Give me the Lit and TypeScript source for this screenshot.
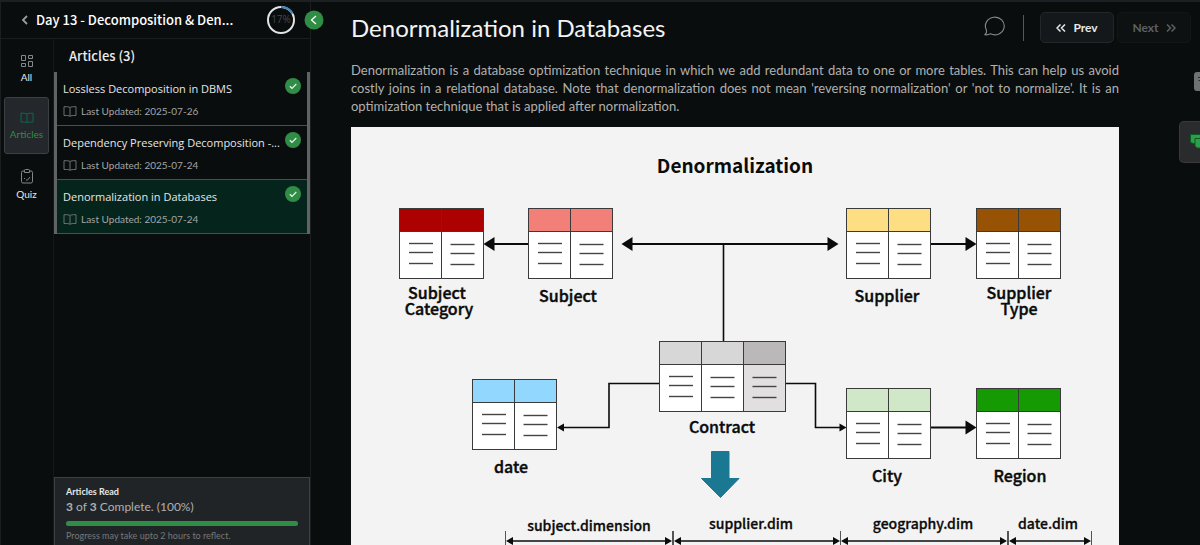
import { LitElement, html, svg, css } from "lit";
import { customElement, property } from "lit/decorators.js";
import { classMap } from "lit/directives/class-map.js";

type Pt = [number, number];

interface Entity {
  x: number;
  y: number;
  heads: string[];
  bodies?: string[];
}

const ENTITIES: Entity[] = [
  { x: 48, y: 81, heads: ["#ad0000", "#ad0000"] },
  { x: 177, y: 81, heads: ["#f28079", "#f28079"] },
  { x: 495, y: 81, heads: ["#fede83", "#fede83"] },
  { x: 625, y: 81, heads: ["#985203", "#985203"] },
  { x: 308, y: 214, heads: ["#d7d7d7", "#d7d7d7", "#bab8b9"], bodies: ["#fff", "#fff", "#e2dfe0"] },
  { x: 121, y: 252, heads: ["#92d8fe", "#92d8fe"] },
  { x: 495, y: 261, heads: ["#d0e8c8", "#d0e8c8"] },
  { x: 625, y: 261, heads: ["#159a04", "#159a04"] },
];

const LABELS: [number, number, string][] = [
  [86, 172, "Subject"],
  [88, 188, "Category"],
  [217, 175, "Subject"],
  [536, 175, "Supplier"],
  [668, 172, "Supplier"],
  [668, 188, "Type"],
  [371, 306, "Contract"],
  [160, 346, "date"],
  [536, 355, "City"],
  [669, 355, "Region"],
];

const DIMENSIONS: [number, number, number, number, string][] = [
  [154, 321, 238, 404, "subject.dimension"],
  [322, 489, 400, 402, "supplier.dim"],
  [489, 656, 572, 402, "geography.dim"],
  [657, 740, 697, 402, "date.dim"],
];

@customElement("denorm-diagram")
export class DenormDiagram extends LitElement {
  static styles = css`
    :host { display: block; background: #f3f3f3; }
    svg { display: block; width: 100%; height: auto; }
    text { font-family: "Noto Sans CJK SC", sans-serif; font-weight: 700; fill: #0b0b0b; text-anchor: middle; }
    .title { font-size: 19px; }
    .label { font-size: 16px; font-weight: 500; stroke: #0b0b0b; stroke-width: 0.4; }
    .dim { font-size: 14px; font-weight: 500; stroke: #0b0b0b; stroke-width: 0.3; }
    .box { stroke: #3a3a3a; stroke-width: 1; }
    .row { stroke: #444; stroke-width: 1.4; }
    .wire { stroke: #0b0b0b; fill: none; stroke-width: 1.6; }
    .thick { stroke-width: 2.2; }
    .tick { stroke: #555; stroke-width: 1; }
  `;

  private entity(e: Entity) {
    return e.heads.map((head, i) => {
      const x = e.x + 0.5 + i * 42;
      const y = e.y + 0.5;
      const shift = i === 0 ? 0 : 1;
      const from = x + (i === 0 ? 9.5 : 9);
      return svg`
        <rect class="box" x=${x} y=${y} width="42" height="70" fill=${e.bodies?.[i] ?? "#fff"}></rect>
        <rect class="box" x=${x} y=${y} width="42" height="23" fill=${head}></rect>
        ${[35, 44, 55].map((d) => svg`<line class="row" x1=${from} x2=${from + 24} y1=${y + d + shift} y2=${y + d + shift}></line>`)}
      `;
    });
  }

  private head([x, y]: Pt, dir: 1 | -1, size: number) {
    const half = Math.round(size * 0.6);
    return svg`<polygon fill="#0b0b0b" points=${`${x},${y} ${x - dir * size},${y - half} ${x - dir * size},${y + half}`}></polygon>`;
  }

  render() {
    return html`
      <svg viewBox="0 0 768 446" role="img" aria-label="Denormalization">
        <text class="title" x="384" y="46">Denormalization</text>
        <path class="wire thick" d="M138 117H177M276 117H482M580 117H619M580 300.5H619"></path>
        <path class="wire" d="M372.5 117V214M308 256.5H258V300.5H212M434 256.5H464.500V300.500H490"></path>
        ${this.head([132.5, 117], -1, 11)} ${this.head([270.5, 117], -1, 11)}
        ${this.head([487.5, 117], 1, 11)} ${this.head([625.5, 117], 1, 11)}
        ${this.head([625.5, 300.5], 1, 11)}
        ${this.head([206, 300.5], -1, 7)} ${this.head([495.5, 300.5], 1, 7)}
        ${ENTITIES.map((e) => this.entity(e))}
        ${LABELS.map(([x, y, t]) => svg`<text class="label" x=${x} y=${y}>${t}</text>`)}
        <polygon fill="#1b7893" stroke="#1b7893" stroke-linejoin="round"
          points="360.500,324.500 378,324.500 378,351.500 388,351.500 369.500,370.500 350.500,351.500 360.500,351.500"></polygon>
        ${DIMENSIONS.map(([a, b, x, y, t]) => svg`
          <path class="tick" d=${`M${a + 0.5} 404V428M${b + 0.5} 404V428`}></path>
          <path class="wire" d=${`M${a + 6} 414H${b - 6}`}></path>
          ${this.head([a + 1, 414], -1, 7)} ${this.head([b, 414], 1, 7)}
          <text class="dim" x=${x} y=${y}>${t}</text>
        `)}
      </svg>
    `;
  }
}

const bookIcon = (w: number, h: number) => svg`
  <svg width=${w} height=${h} viewBox="0 0 14 11" fill="none" stroke="currentColor" aria-hidden="true">
    <path d="M7 1.500C6 .8 4.500.7 1 .7V9.500C4.500 9.500 6 9.600 7 10.300C8 9.600 9.500 9.500 13 9.500V.7C9.500.7 8 .8 7 1.500ZM7 1.500V10.300"></path>
  </svg>`;

@customElement("article-item")
export class ArticleItem extends LitElement {
  @property() heading = "";
  @property() date = "";
  @property({ type: Boolean }) active = false;

  static styles = css`
    :host { display: block; }
    .item {
      display: flex; justify-content: space-between; height: 53px;
      padding: 0 6px; border-bottom: 1px solid #4b4e50;
      color: #e6e6e6; text-decoration: none;
    }
    .active { background: #05241c; }
    .body { min-width: 0; padding-top: 8px; }
    .heading { font-family: "Open Sans", sans-serif; font-size: 11px; line-height: 18px; white-space: nowrap; }
    .meta { display: flex; align-items: center; gap: 4px; margin-top: 5px; font-size: 10px; line-height: 16px; color: #a3a6a6; }
    .meta svg { color: #6d7071; }
    .check { flex: none; margin: 6px 0 0; }
  `;

  render() {
    return html`
      <a href="#" class=${classMap({ item: true, active: this.active })}>
        <div class="body">
          <div class="heading">${this.heading}</div>
          <div class="meta">${bookIcon(14, 11)}<span>Last Updated: ${this.date}</span></div>
        </div>
        <svg class="check" width="16" height="16" viewBox="0 0 16 16" aria-label="Completed">
          <circle cx="8" cy="8" r="8" fill="#2f8d46"></circle>
          <path d="M4.800 8.200L7 10.300L11.300 6" fill="none" stroke="#e8f5ea" stroke-width="1.200"></path>
        </svg>
      </a>
    `;
  }
}

@customElement("app-root")
export class AppRoot extends LitElement {
  static styles = css`
    * { box-sizing: border-box; }
    :host { display: block; font-family: Lato, sans-serif; color: #e8e8e8; }
    button { font: inherit; color: inherit; border: 0; padding: 0; background: none; cursor: pointer; }
    .shell {
      position: relative; display: grid; grid-template-columns: 311px minmax(0, 1fr);
      height: 100vh; overflow: hidden; background: #0a0d0e; border-top: 2px solid #1d2022;
    }
    .side { position: relative; display: flex; flex-direction: column; min-height: 0; border: solid #1b1e1f; border-width: 0 1px; }
    .side-head { display: flex; align-items: center; height: 37px; padding: 0 15px 0 18px; border-bottom: 1px solid #1b1e1f; }
    .back { display: flex; padding: 2px; color: #9b9d9e; }
    .day { flex: 1; margin: 0 0 0 5px; font: 500 13px/20px "Noto Sans CJK SC", sans-serif; color: #fff; white-space: nowrap; }
    .ring { display: block; }
    .ring text { font: 10px "Open Sans", sans-serif; fill: #45484a; text-anchor: middle; }
    .collapse { position: absolute; top: 8px; right: -14px; display: flex; z-index: 1; }
    .cols { flex: 1; display: flex; min-height: 0; }
    .rail { width: 53px; flex: none; border-right: 1px solid #16191a; padding: 1px 4px 0 3px; }
    .tab {
      display: flex; flex-direction: column; align-items: center; gap: 3px; width: 100%; height: 57px;
      padding-top: 14px; border: 1px solid transparent; border-radius: 3px; font-size: 10px; line-height: 14px; color: #e8e8e8;
    }
    .tab svg { color: #85888a; }
    .tab.on { background: #24272b; border-color: #3c4044; color: #2f8d46; }
    .tab.on svg { color: #0a6b48; }
    .list-col { flex: 1; min-width: 0; display: flex; flex-direction: column; }
    .list-title { margin: 0; padding: 7px 15px 6px; font: 500 13px/20px "Noto Sans CJK SC", sans-serif; color: #ececec; }
    .list { border: solid #606364; border-width: 0 3px; }
    .progress { margin-top: auto; padding: 8px 11px 3px 11px; background: #212427; border: 1px solid #3e4143; border-bottom: 0; }
    .progress-name { font-size: 9px; line-height: 12px; font-weight: 700; }
    .progress-count { font-size: 12px; line-height: 18px; color: #aeb1b2; }
    progress { display: block; width: 100%; height: 5px; margin: 5px 0 4px; border: 0; appearance: none; -webkit-appearance: none; }
    progress::-webkit-progress-bar { background: #3a3d40; border-radius: 3px; }
    progress::-webkit-progress-value { background: #2f8d46; border-radius: 3px; }
    .note { font-size: 9px; line-height: 12px; color: #74787a; }
    .main { min-width: 0; overflow: auto; scrollbar-width: none; }
    .bar { display: flex; align-items: center; gap: 3px; height: 51px; padding: 0 9px 0 40px; }
    h1 { flex: 1; margin: 0; font-size: 24px; line-height: 30px; font-weight: 400; color: #f4f4f4; white-space: nowrap; }
    .divider { width: 1px; height: 26px; margin: 0 13px 0 14px; background: #55585a; }
    .nav { display: flex; align-items: center; justify-content: center; gap: 7px; width: 74px; height: 31px; border: 1px solid #22272b; border-radius: 5px; background: #14181b; font-size: 12px; font-weight: 700; }
    .nav:disabled { background: #0e1112; border-color: #121617; color: #5d6062; }
    .article { padding: 8px 81px 0 40px; }
    .article p { margin: 0 0 12px; font-size: 13px; line-height: 18px; color: #b0b1af; text-align: justify; }
    .notes { position: absolute; top: 70px; right: 0; display: flex; width: 6px; height: 19px; background: #6f7274; border-radius: 3px 0 0 3px; overflow: hidden; }
    .chat { position: absolute; top: 119px; right: 0; display: flex; align-items: flex-start; width: 21px; height: 42px; padding: 11px 0 0 10px; background: #2a2b2c; border: 1px solid #38393a; border-right: 0; border-radius: 5px 0 0 5px; overflow: hidden; }
    .chat svg { flex: none; }
    .notes svg { flex: none; }
  `;

  render() {
    return html`
      <div class="shell">
        <aside class="side">
          <header class="side-head">
            <button class="back" aria-label="Back">
              <svg width="8" height="10" viewBox="0 0 8 10" fill="none" stroke="currentColor" stroke-width="1.800"><path d="M6 1L2 5L6 9"></path></svg>
            </button>
            <h2 class="day">Day 13 - Decomposition &amp; Den...</h2>
            <svg class="ring" width="28" height="28" viewBox="0 0 28 28">
              <circle cx="14" cy="14" r="13" fill="none" stroke="#e2e4e5" stroke-width="2"></circle>
              <path d="M14 1A13 13 0 0 1 25.400 7.700" fill="none" stroke="#3f86b8" stroke-width="2"></path>
              <text x="14" y="17">17%</text>
            </svg>
          </header>
          <button class="collapse" aria-label="Collapse sidebar">
            <svg width="20" height="20" viewBox="0 0 20 20"><circle cx="10" cy="10" r="9.500" fill="#2f8d46"></circle><path d="M12 6L7.500 10L12 14" fill="none" stroke="#fff" stroke-width="1.300"></path></svg>
          </button>
          <div class="cols">
            <nav class="rail">
              <button class="tab">
                <svg width="12" height="12" viewBox="0 0 12 12" fill="none" stroke="currentColor"><path d="M.5 .5h4v5h-4zM7.500 .5h4v3h-4zM.5 8.500h4v3h-4zM7.500 6.500h4v5h-4z"></path></svg>
                All
              </button>
              <button class="tab on">
                ${bookIcon(14, 12)}
                Articles
              </button>
              <button class="tab">
                <svg width="12" height="15" viewBox="0 0 12 15" fill="none" stroke="currentColor"><path d="M3.500 2H2A1.500 1.500 0 0 0 .5 3.500V12.500A1.500 1.500 0 0 0 2 14H10A1.500 1.500 0 0 0 11.500 12.500V3.500A1.500 1.500 0 0 0 10 2H8.500M3.500 3.500V1.500A1 1 0 0 1 4.500 .5H7.500A1 1 0 0 1 8.500 1.500V3.500ZM3 9.500H4M5 10.500L6.200 11.500L9 8"></path></svg>
                Quiz
              </button>
            </nav>
            <div class="list-col">
              <h3 class="list-title">Articles (3)</h3>
              <div class="list">
                <article-item heading="Lossless Decomposition in DBMS" date="2025-07-26"></article-item>
                <article-item heading="Dependency Preserving Decomposition -..." date="2025-07-24"></article-item>
                <article-item heading="Denormalization in Databases" date="2025-07-24" active></article-item>
              </div>
              <section class="progress">
                <div class="progress-name" id="read">Articles Read</div>
                <div class="progress-count"><b>3</b> of <b>3</b> Complete. (100%)</div>
                <progress max="3" value="3" aria-labelledby="read"></progress>
                <div class="note">Progress may take upto 2 hours to reflect.</div>
              </section>
            </div>
          </div>
        </aside>
        <main class="main">
          <header class="bar">
            <h1>Denormalization in Databases</h1>
            <button aria-label="Comments">
              <svg width="22" height="20" viewBox="0 0 22 20" fill="none" stroke="#85888a" stroke-width="1.100"><path d="M2.200 13.500A9.400 8.800 0 1 1 6.500 17.800C5 18.500 3 19.100 1 18.700C2.300 17.500 2.900 15.500 2.200 13.500Z"></path></svg>
            </button>
            <span class="divider"></span>
            <button class="nav">
              <svg width="10" height="8" viewBox="0 0 10 8" fill="none" stroke="currentColor" stroke-width="1.500"><path d="M4.500 .5L1 4L4.500 7.500M9 .5L5.500 4L9 7.500"></path></svg>
              Prev
            </button>
            <button class="nav" disabled>
              Next
              <svg width="10" height="8" viewBox="0 0 10 8" fill="none" stroke="currentColor" stroke-width="1.500"><path d="M1 .5L4.500 4L1 7.500M5.500 .5L9 4L5.500 7.500"></path></svg>
            </button>
          </header>
          <article class="article">
            <p>Denormalization is a database optimization technique in which we add redundant data to one or more tables. This can help us avoid costly joins in a relational database. Note that denormalization does not mean 'reversing normalization' or 'not to normalize'. It is an optimization technique that is applied after normalization.</p>
            <denorm-diagram></denorm-diagram>
          </article>
        </main>
        <button class="notes" aria-label="Notes">
          <svg width="6" height="19" viewBox="0 0 6 19" fill="none" stroke="#2a2d2f"><path d="M4 5.500H6M4.500 8.500H6"></path></svg>
        </button>
        <button class="chat" aria-label="Discussion">
          <svg width="14" height="16" viewBox="0 0 14 16" fill="#2f9d4c" stroke="#0b5a22"><path d="M.5 1.500H13.500V10.500H3.500L.5 9.500Z"></path><path d="M5 5.500H14V15H7L5 13Z"></path></svg>
        </button>
      </div>
    `;
  }
}
